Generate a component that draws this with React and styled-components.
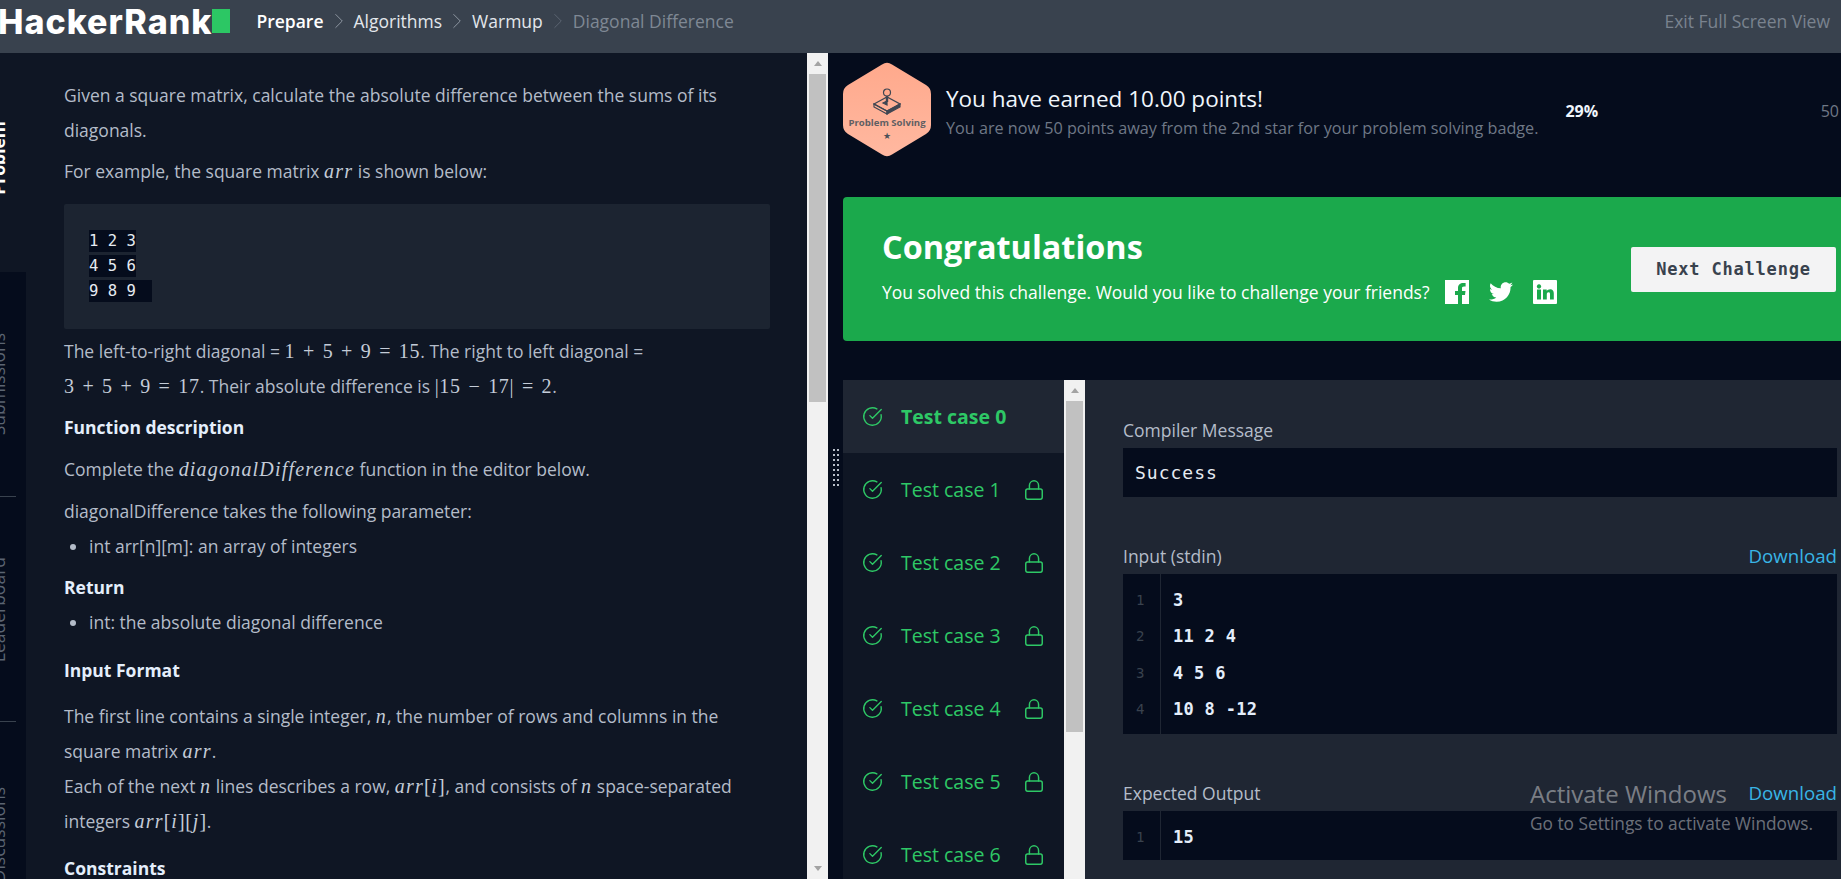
import React from 'react'
import styled, { createGlobalStyle } from 'styled-components';
import { ChevronRight, CircleCheckBig, Lock } from 'lucide-react';
import { FaTwitter } from 'react-icons/fa';

const Global = createGlobalStyle`
    html, body {
        margin: 0;
        height: 100%;
        overflow: hidden;
        background: #050c1c;
    }
    * { box-sizing: border-box; }
`;

const tests = [0, 1, 2, 3, 4, 5, 6];

function Scrollbar({ height }) {
    return (
        <Track>
            <Arrow />
            <Thumb $height={height} />
            <Arrow $down />
        </Track>
    )
}

function Chevron() {
    return <ChevronRight size={26} strokeWidth={0.9} />
}

function FacebookIcon() {
    return (
        <svg width="24" height="24" viewBox="0 0 24 24" fill="currentColor">
            <path d="M0 0H24V24H17V15H20L20.5 11H17V8.5C17 7.3 17.4 6.6 19 6.6H20.6V3.1C20.3 3 19.3 3 18.1 3C15.4 3 13 4.6 13 8V11H10V15H13V24H0Z" />
        </svg>
    )
}

function LinkedinIcon() {
    return (
        <svg width="24" height="24" viewBox="0 0 24 24" fill="currentColor" fillRule="evenodd">
            <path d="M1 0H23Q24 0 24 1V23Q24 24 23 24H1Q0 24 0 23V1Q0 0 1 0Z M4 9.5H8V19.5H4Z M6 4.3a2.2 2.2 0 1 0 .01 0Z M10 9.5H13.7V11C14.4 10 15.6 9.2 17.2 9.2C19.7 9.2 20.8 10.8 20.8 13.5V19.5H17V14.2C17 12.9 16.5 12.3 15.5 12.3C14.4 12.3 13.8 13 13.8 14.3V19.5H10Z" />
        </svg>
    )
}

function Badge() {
    return (
        <BadgeBox>
            <BadgeShape viewBox="0 0 88 95">
                <defs>
                    <linearGradient id="hex" x1="0" y1="0" x2="0" y2="1">
                        <stop offset="0" stopColor="#ffa98c" />
                        <stop offset="1" stopColor="#ffb8a0" />
                    </linearGradient>
                </defs>
                <path d="M39 2.5 Q44 -1 49 2.5 L83 23 Q88 26 88 32 L88 63 Q88 69 83 72 L49 92.5 Q44 96 39 92.5 L5 72 Q0 69 0 63 L0 32 Q0 26 5 23 Z" fill="url(#hex)" />
            </BadgeShape>
            <BadgeContent>
                <svg width="28" height="27" viewBox="0 0 28 27" fill="none" stroke="#3f4652" strokeWidth="1.2">
                    <path d="M1 16 L14 9 L27 16 L14 23 Z" />
                    <path d="M1 16 V19 L14 26 V23 Z" />
                    <path d="M14 23 V26 L27 19 V16 Z" fill="#3f4652" />
                    <path d="M14 17 L10 15 L14 13 Z" fill="#3f4652" />
                    <path d="M14 14 V7" strokeWidth="2.4" />
                    <circle cx="14" cy="4.5" r="3.5" fill="#ffa98c" />
                </svg>
                <BadgeLabel>Problem Solving</BadgeLabel>
                <BadgeStar>★</BadgeStar>
            </BadgeContent>
        </BadgeBox>
    )
}

function App() {
    return (
        <Page>
            <Global />
            <Header>
                <Logo>HackerRank<LogoMark /></Logo>
                <Crumbs>
                    <Crumb $strong>Prepare</Crumb>
                    <Sep><Chevron /></Sep>
                    <Crumb>Algorithms</Crumb>
                    <Sep><Chevron /></Sep>
                    <Crumb>Warmup</Crumb>
                    <Sep $dim><Chevron /></Sep>
                    <Crumb $dim>Diagonal Difference</Crumb>
                </Crumbs>
                <Exit>Exit Full Screen View</Exit>
            </Header>

            <Main>
                <Rail>
                    <Tab $active><TabText $active>Problem</TabText></Tab>
                    <Tab $line><TabText>Submissions</TabText></Tab>
                    <Tab $line><TabText>Leaderboard</TabText></Tab>
                    <Tab><TabText>Discussions</TabText></Tab>
                </Rail>

                <Problem>
                    <Para>Given a square matrix, calculate the absolute difference between the sums of its diagonals.</Para>
                    <Para $mt={6}>For example, the square matrix <Mi>arr</Mi> is shown below:</Para>
                    <CodeBox>
                        <CodeLine><Mark>1 2 3</Mark></CodeLine>
                        <CodeLine><Mark>4 5 6</Mark></CodeLine>
                        <CodeLine><Mark $pad={16}>9 8 9</Mark></CodeLine>
                    </CodeBox>
                    <Para $mt={5}>
                        The left-to-right diagonal = <Mn>1 + 5 + 9 = 15</Mn>. The right to left diagonal = <Mn>3 + 5 + 9 = 17</Mn>. Their absolute difference is <Mn>|15 − 17| = 2</Mn>.
                    </Para>
                    <Heading $mt={6}>Function description</Heading>
                    <Para $mt={7}>Complete the <Mi>diagonalDifference</Mi> function in the editor below.</Para>
                    <Para $mt={7}>diagonalDifference takes the following parameter:</Para>
                    <Bullets><li>int arr[n][m]: an array of integers</li></Bullets>
                    <Heading $mt={6}>Return</Heading>
                    <Bullets><li>int: the absolute diagonal difference</li></Bullets>
                    <Heading $mt={13}>Input Format</Heading>
                    <Para $mt={11}>
                        The first line contains a single integer, <Mi>n</Mi>, the number of rows and columns in the square matrix <Mi>arr</Mi>.<br />
                        Each of the next <Mi>n</Mi> lines describes a row, <Mi>arr</Mi><Mn>[</Mn><Mi>i</Mi><Mn>]</Mn>, and consists of <Mi>n</Mi> space-separated integers <Mi>arr</Mi><Mn>[</Mn><Mi>i</Mi><Mn>][</Mn><Mi>j</Mi><Mn>]</Mn>.
                    </Para>
                    <Heading $mt={12}>Constraints</Heading>
                </Problem>
                <Scrollbar height={328} />

                <Gutter>
                    <Handle>
                        {Array.from({ length: 16 }).map((_, i) => <HandleDot key={i} />)}
                    </Handle>
                </Gutter>

                <Result>
                    <Earned>
                        <Badge />
                        <EarnedText>
                            <EarnedTitle>You have earned 10.00 points!</EarnedTitle>
                            <EarnedSub>You are now 50 points away from the 2nd star for your problem solving badge.</EarnedSub>
                        </EarnedText>
                        <Progress>
                            <Percent>29%</Percent>
                            <Goal>50</Goal>
                        </Progress>
                    </Earned>

                    <Banner>
                        <BannerText>
                            <BannerTitle>Congratulations</BannerTitle>
                            <BannerRow>
                                <span>You solved this challenge. Would you like to challenge your friends?</span>
                                <Socials>
                                    <FacebookIcon />
                                    <FaTwitter size={24} />
                                    <LinkedinIcon />
                                </Socials>
                            </BannerRow>
                        </BannerText>
                        <NextButton>Next Challenge</NextButton>
                    </Banner>

                    <Tests>
                        <TestList>
                            {tests.map((t) => (
                                <TestItem key={t} $active={t === 0}>
                                    <CircleCheckBig size={21} strokeWidth={1.6} />
                                    <TestName $active={t === 0}>Test case {t}</TestName>
                                    {t !== 0 && <LockIcon size={22} strokeWidth={1.6} />}
                                </TestItem>
                            ))}
                        </TestList>
                        <Scrollbar height={331} />
                        <Detail>
                            <Field>
                                <FieldHead><FieldLabel>Compiler Message</FieldLabel></FieldHead>
                                <Message>Success</Message>
                            </Field>
                            <Field>
                                <FieldHead>
                                    <FieldLabel>Input (stdin)</FieldLabel>
                                    <Download>Download</Download>
                                </FieldHead>
                                <Code $h={160}>
                                    <LineNos>
                                        <LineNo>1</LineNo>
                                        <LineNo>2</LineNo>
                                        <LineNo>3</LineNo>
                                        <LineNo>4</LineNo>
                                    </LineNos>
                                    <CodeBody>
                                        <CodeText>3</CodeText>
                                        <CodeText>11 2 4</CodeText>
                                        <CodeText>4 5 6</CodeText>
                                        <CodeText>10 8 -12</CodeText>
                                    </CodeBody>
                                </Code>
                            </Field>
                            <Field>
                                <FieldHead>
                                    <FieldLabel>Expected Output</FieldLabel>
                                    <Download>Download</Download>
                                </FieldHead>
                                <Code $h={49}>
                                    <LineNos><LineNo>1</LineNo></LineNos>
                                    <CodeBody><CodeText>15</CodeText></CodeBody>
                                </Code>
                            </Field>
                        </Detail>
                    </Tests>
                </Result>
            </Main>

            <Watermark>
                <WatermarkTitle>Activate Windows</WatermarkTitle>
                <WatermarkSub>Go to Settings to activate Windows.</WatermarkSub>
            </Watermark>
        </Page>
    )
}

export default App;

const Page = styled.div`
    position: relative;
    width: 100%;
    height: 100vh;
    display: flex;
    flex-direction: column;
    overflow: hidden;
    font-family: "Open Sans", sans-serif;
    font-size: 17.5px;
`;

const Header = styled.header`
    flex: 0 0 53px;
    display: flex;
    align-items: flex-start;
    background: #39424e;
    padding-right: 11px;
`;

const Logo = styled.div`
    flex: 0 0 232px;
    display: flex;
    align-items: center;
    height: 42px;
    margin-left: -2px;
    font-family: Inter, sans-serif;
    font-size: 34px;
    font-weight: 800;
    letter-spacing: 1px;
    color: #fff;
`;

const LogoMark = styled.span`
    width: 18px;
    height: 24px;
    margin-left: auto;
    background: #2cc764;
`;

const Crumbs = styled.nav`
    display: flex;
    align-items: center;
    height: 42px;
    margin-left: 26px;
`;

const Crumb = styled.span`
    font-weight: ${(p) => (p.$strong ? 600 : 400)};
    color: ${(p) => (p.$dim ? '#7f8894' : p.$strong ? '#fff' : '#e3e7ec')};
`;

const Sep = styled.span`
    display: flex;
    margin: 0 2px;
    color: ${(p) => (p.$dim ? '#5c6572' : '#8f97a2')};
`;

const Exit = styled.span`
    margin-left: auto;
    height: 42px;
    line-height: 42px;
    color: #7a838f;
`;

const Main = styled.main`
    flex: 1;
    min-height: 0;
    display: flex;
`;

const Rail = styled.aside`
    flex: 0 0 26px;
    display: flex;
    flex-direction: column;
    overflow: hidden;
    background: #050c1c;
`;

const Tab = styled.div`
    position: relative;
    flex: 0 0 ${(p) => (p.$active ? 219 : 225)}px;
    display: flex;
    align-items: center;
    justify-content: flex-end;
    padding-right: 17px;
    padding-bottom: ${(p) => (p.$active ? 10 : 0)}px;
    background: ${(p) => (p.$active ? '#0f1624' : 'transparent')};
    overflow: hidden;

    &:after {
        content: "";
        display: ${(p) => (p.$line ? 'block' : 'none')};
        position: absolute;
        left: 0;
        bottom: 0;
        width: 16px;
        height: 1px;
        background: #39424e;
    }
`;

const TabText = styled.span`
    flex: none;
    writing-mode: vertical-rl;
    transform: rotate(180deg);
    line-height: 22px;
    font-weight: ${(p) => (p.$active ? 700 : 400)};
    color: ${(p) => (p.$active ? '#fff' : '#5b6472')};
`;

const Problem = styled.section`
    flex: 0 0 781px;
    padding: 25px 37px 0 38px;
    overflow: hidden;
    background: #0f1624;
    color: #b4bcc9;
    line-height: 35px;
`;

const Para = styled.p`
    margin: ${(p) => p.$mt || 0}px 0 0;
`;

const Mi = styled.span`
    font-family: "Liberation Serif", serif;
    font-style: italic;
    font-size: 20px;
    letter-spacing: 1.2px;
    color: #c4ccd8;
`;

const Mn = styled.span`
    font-family: "Liberation Serif", serif;
    font-size: 20px;
    letter-spacing: 0.7px;
    word-spacing: 2px;
    white-space: nowrap;
    color: #c4ccd8;
`;

const CodeBox = styled.pre`
    margin: 15px 0 0;
    height: 125px;
    padding: 26px 25px 0;
    border-radius: 2px;
    background: #1c2431;
    font-family: "DejaVu Sans Mono", monospace;
    font-size: 15.6px;
    color: #e6ebf2;
`;

const CodeLine = styled.div`
    height: 25px;
    line-height: 22px;
`;

const Mark = styled.span`
    display: inline-block;
    height: 22px;
    padding-right: ${(p) => p.$pad || 0}px;
    background: #050c1c;
`;

const Heading = styled.h3`
    margin: ${(p) => p.$mt || 0}px 0 0;
    font-size: 17.5px;
    font-weight: 700;
    color: #e4eefb;
`;

const Bullets = styled.ul`
    margin: 0;
    padding: 0 0 0 25px;

    li::marker { color: #b4bcc9; }
`;

const Track = styled.div`
    flex: 0 0 21px;
    display: flex;
    flex-direction: column;
    background: #f1f1f1;
    padding: 0 2px;
`;

const Arrow = styled.div`
    flex: 0 0 21px;
    margin-top: ${(p) => (p.$down ? 'auto' : 0)};
    display: flex;
    align-items: center;
    justify-content: center;

    &:before {
        content: "";
        border-left: 4px solid transparent;
        border-right: 4px solid transparent;
        border-${(p) => (p.$down ? 'top' : 'bottom')}: 5px solid #a3a3a3;
    }
`;

const Thumb = styled.div`
    height: ${(p) => p.$height}px;
    background: #c1c1c1;
`;

const Gutter = styled.div`
    flex: 0 0 15px;
    display: flex;
    justify-content: center;
    padding-top: 396px;
    background: #050c1c;
`;

const Handle = styled.div`
    width: 6px;
    height: 40px;
    display: grid;
    grid-template-columns: 2px 2px;
    grid-auto-rows: 2px;
    column-gap: 2px;
    row-gap: 3px;
`;

const HandleDot = styled.i`
    background: #b8bec8;
`;

const Result = styled.section`
    flex: 1;
    min-width: 0;
    overflow: hidden;
    padding-top: 9px;
    background: #050c1c;
`;

const Earned = styled.div`
    display: flex;
    align-items: center;
    height: 95px;
`;

const BadgeBox = styled.div`
    position: relative;
    flex: 0 0 88px;
    height: 95px;
`;

const BadgeShape = styled.svg`
    position: absolute;
    inset: 0;
    width: 100%;
    height: 100%;
`;

const BadgeContent = styled.div`
    position: relative;
    display: flex;
    flex-direction: column;
    align-items: center;
    padding-top: 26px;
`;

const BadgeLabel = styled.span`
    margin-top: 1px;
    font-size: 9.6px;
    line-height: 14px;
    font-weight: 700;
    white-space: nowrap;
    color: #5f5f63;
`;

const BadgeStar = styled.span`
    font-family: "DejaVu Sans", sans-serif;
    font-size: 9px;
    line-height: 12px;
    color: #4a4f58;
`;

const EarnedText = styled.div`
    margin: 6px 0 0 15px;
`;

const EarnedTitle = styled.div`
    font-size: 22.5px;
    line-height: 30px;
    color: #f0f6fc;
`;

const EarnedSub = styled.div`
    font-size: 16.2px;
    line-height: 28px;
    color: #6f7886;
`;

const Progress = styled.div`
    flex: 1;
    display: flex;
    justify-content: space-between;
    margin: 3px 0 0 27px;
    padding-right: 2px;
`;

const Percent = styled.span`
    font-size: 16px;
    font-weight: 700;
    color: #f0f6fc;
`;

const Goal = styled.span`
    font-size: 16px;
    color: #6f7886;
`;

const Banner = styled.div`
    display: flex;
    align-items: center;
    justify-content: space-between;
    height: 144px;
    margin: 40px -4px 0 0;
    padding: 0 9px 0 39px;
    border-radius: 4px;
    background: #1ba94c;
    color: #fff;
`;

const BannerText = styled.div`
    padding-bottom: 10px;
`;

const BannerTitle = styled.h1`
    margin: 0;
    font-size: 32.4px;
    line-height: 44px;
    font-weight: 700;
`;

const BannerRow = styled.div`
    display: flex;
    align-items: center;
    margin-top: 12px;
`;

const Socials = styled.div`
    display: flex;
    align-items: center;
    gap: 20px;
    margin-left: 15px;
`;

const NextButton = styled.button`
    width: 205px;
    height: 45px;
    border: 0;
    border-radius: 2px;
    background: #f3f3f4;
    font-family: "DejaVu Sans Mono", monospace;
    font-size: 17px;
    font-weight: 700;
    letter-spacing: 0.8px;
    color: #39424e;
`;

const Tests = styled.div`
    display: flex;
    height: 530px;
    margin-top: 39px;
`;

const TestList = styled.div`
    flex: 0 0 221px;
    background: #0f1624;
`;

const TestItem = styled.div`
    display: flex;
    align-items: center;
    height: 73px;
    padding-left: 19px;
    background: ${(p) => (p.$active ? '#1f2633' : 'transparent')};
    color: #2ec866;
`;

const TestName = styled.span`
    margin-left: 18px;
    font-size: 19.5px;
    font-weight: ${(p) => (p.$active ? 700 : 400)};
`;

const LockIcon = styled(Lock)`
    margin-left: auto;
    margin-right: 19px;
`;

const Detail = styled.div`
    flex: 1;
    min-width: 0;
    display: flex;
    flex-direction: column;
    gap: 47px;
    padding: 38px 4px 0 38px;
    background: #1f2633;
`;

const Field = styled.div``;

const FieldHead = styled.div`
    display: flex;
    justify-content: space-between;
    height: 30px;
    line-height: 24px;
`;

const FieldLabel = styled.span`
    color: #b4bcc9;
`;

const Download = styled.a`
    font-size: 18.7px;
    color: #39b5e6;
`;

const Message = styled.div`
    height: 49px;
    padding-left: 12px;
    background: #050c1c;
    font-family: "DejaVu Sans Mono", monospace;
    font-size: 18px;
    letter-spacing: 1px;
    line-height: 49px;
    color: #e6ebf2;
`;

const Code = styled.div`
    display: flex;
    height: ${(p) => p.$h}px;
    background: #050c1c;
    font-family: "DejaVu Sans Mono", monospace;
    font-size: 17px;
    line-height: 36.5px;
`;

const LineNos = styled.div`
    flex: 0 0 38px;
    padding: 7.5px 0 0 13px;
    border-right: 1px solid #1f2633;
    color: #39424e;
    font-size: 14px;
`;

const LineNo = styled.div``;

const CodeBody = styled.div`
    padding: 7.5px 0 0 12px;
`;

const CodeText = styled.div`
    font-weight: 700;
    letter-spacing: 0.3px;
    white-space: pre;
    color: #e4eefb;
`;

const Watermark = styled.div`
    position: absolute;
    left: 1530px;
    top: 776px;
    pointer-events: none;
    color: rgba(255, 255, 255, 0.42);
`;

const WatermarkTitle = styled.div`
    font-size: 24px;
    line-height: 36px;
`;

const WatermarkSub = styled.div`
    font-size: 17.3px;
    line-height: 24px;
`;
